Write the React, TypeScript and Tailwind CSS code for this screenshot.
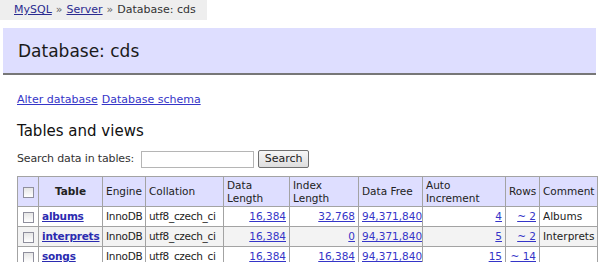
import React from "react";

const rows = [
  { name: "albums", dataLength: "16,384", indexLength: "32,768", auto: "4", rows: "~ 2", comment: "Albums" },
  { name: "interprets", dataLength: "16,384", indexLength: "0", auto: "5", rows: "~ 2", comment: "Interprets" },
  { name: "songs", dataLength: "16,384", indexLength: "16,384", auto: "15", rows: "~ 14", comment: "" },
];

function Check() {
  return (
    <span className="inline-block w-[11px] h-[11px] border border-[#8f8f9d] bg-gradient-to-b from-[#e6e6e6] to-white align-middle" />
  );
}

export default function App() {
  const cell = "border-r border-b border-[#a3a3a3] px-[3px] py-0 whitespace-nowrap overflow-hidden";
  const link = "text-[#3535c8] underline";
  return (
    <div className="w-[600px] h-[262px] overflow-hidden bg-white text-[#222] text-[11px] leading-[14px] font-['DejaVu_Sans',Verdana,sans-serif]">
      {/* Breadcrumb */}
      <div className="inline-flex items-center h-[20px] bg-[#eeeeee] pl-[14px] pr-[11px] text-[#333]">
        <a className="text-[#2b2b90] underline">MySQL</a>
        <span className="mx-[4px] text-[#666]">»</span>
        <a className="text-[#2b2b90] underline">Server</a>
        <span className="mx-[4px] text-[#666]">»</span>
        <span>Database: cds</span>
      </div>

      {/* Title */}
      <div className="mt-[8px] ml-[3px] mr-[4px] h-[47px] bg-[#dedeff] border-b-2 border-[#777] flex items-center pl-[15px]">
        <h1 className="text-[17px] font-normal text-[#1a1a1a]">Database: cds</h1>
      </div>

      <div className="pl-[17px]">
        <div className="mt-[18px] flex gap-[4px]">
          <a className={link}>Alter database</a>
          <a className={link}>Database schema</a>
        </div>

        <h2 className="mt-[15px] text-[15px] leading-[18px] font-normal text-[#111]">Tables and views</h2>

        <div className="mt-[10px] flex items-center h-[18px]">
          <span className="text-[#333] tracking-[-0.15px]">Search data in tables:</span>
          <span className="ml-[7px] w-[113px] h-[17px] border border-[#b5b5b5] bg-white" />
          <button className="ml-[4px] w-[51px] h-[18px] border border-[#707070] rounded-[2px] bg-gradient-to-b from-[#f6f6f6] to-[#dedede] text-[11px] text-[#222]">
            Search
          </button>
        </div>

        <table className="mt-[8px] table-fixed border-collapse border-t border-l border-[#a3a3a3] w-[580px] text-[10.5px] leading-[13px]">
          <thead>
            <tr className="bg-[#dedeff] h-[30px] text-left align-middle">
              <th className={`${cell} w-[21px] text-center font-normal`}><Check /></th>
              <th className={`${cell} w-[64px] text-center font-bold`}>Table</th>
              <th className={`${cell} w-[43px] font-normal`}>Engine</th>
              <th className={`${cell} w-[78px] font-normal`}>Collation</th>
              <th className={`${cell} w-[66px] font-normal`}>Data<br />Length</th>
              <th className={`${cell} w-[69px] font-normal`}>Index<br />Length</th>
              <th className={`${cell} w-[64px] font-normal`}>Data Free</th>
              <th className={`${cell} w-[83px] font-normal`}>Auto<br />Increment</th>
              <th className={`${cell} w-[34px] font-normal`}>Rows</th>
              <th className={`${cell} w-[58px] font-normal`}>Comment</th>
            </tr>
          </thead>
          <tbody>
            {rows.map((r, i) => (
              <tr key={r.name} className={`h-[20px] ${i % 2 === 1 ? "bg-[#f3f3f3]" : "bg-white"}`}>
                <td className={`${cell} text-center`}><Check /></td>
                <th className={`${cell} text-left`}>
                  <a className="text-[#2b2bb0] underline font-bold tracking-[-0.2px]">{r.name}</a>
                </th>
                <td className={`${cell} tracking-[-0.3px]`}>InnoDB</td>
                <td className={`${cell} tracking-[-0.3px]`}>utf8_czech_ci</td>
                <td className={`${cell} text-right`}><a className={link}>{r.dataLength}</a></td>
                <td className={`${cell} text-right`}><a className={link}>{r.indexLength}</a></td>
                <td className={cell}><a className={link}>94,371,840</a></td>
                <td className={`${cell} text-right`}><a className={link}>{r.auto}</a></td>
                <td className={`${cell} text-right`}><a className={link}>{r.rows}</a></td>
                <td className={cell}>{r.comment}</td>
              </tr>
            ))}
          </tbody>
        </table>
      </div>
    </div>
  );
}
